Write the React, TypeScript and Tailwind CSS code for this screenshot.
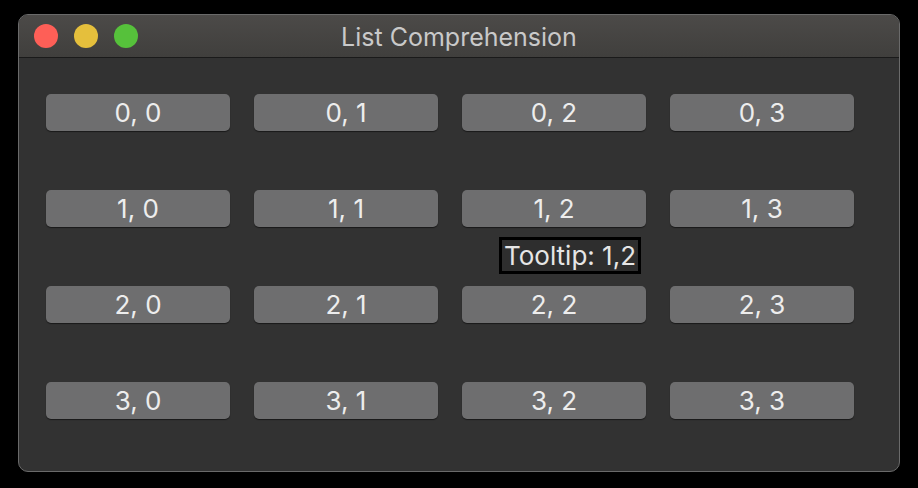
const rows = [0, 1, 2, 3];
const cols = [0, 1, 2, 3];

function TrafficLight({ color }: { color: string }) {
  return <div className={`w-6 h-6 rounded-full ${color}`} />;
}

export default function App() {
  return (
    <div
      className="w-[918px] h-[488px] bg-black pt-[14px] pl-[18px] relative"
      style={{ fontFamily: 'Inter, "Liberation Sans", sans-serif' }}
    >
      <div className="w-[882px] h-[458px] rounded-[10px] border border-[#6a6a6a] bg-[#323232] overflow-hidden flex flex-col">
        <div className="h-[43px] shrink-0 flex items-center px-[15px] bg-gradient-to-b from-[#4c4a48] to-[#403f3d] border-b border-[#1a1a1a] relative">
          <div className="flex gap-4 items-center">
            <TrafficLight color="bg-[#fe5f57]" />
            <TrafficLight color="bg-[#e5bf3c]" />
            <TrafficLight color="bg-[#56c13b]" />
          </div>
          <div className="absolute inset-0 flex items-center justify-center text-[25px] text-[#c9c9c9] pt-[3px]">
            List Comprehension
          </div>
        </div>
        <div className="flex flex-col gap-[59px] pt-[36px] pl-[27px]">
          {rows.map((r) => (
            <div key={r} className="flex gap-6">
              {cols.map((c) => (
                <div
                  key={c}
                  className="w-[184px] h-[37px] rounded-[5px] bg-[#6e6e6f] shadow-[0_1px_1px_rgba(0,0,0,0.5)] flex items-center justify-center text-[26px] text-[#ededed]"
                >
                  {r}, {c}
                </div>
              ))}
            </div>
          ))}
        </div>
      </div>
      <div className="absolute left-[499px] top-[237px] w-[142px] h-[37px] border-[3px] border-black bg-[#2e2e2e] flex items-center justify-center text-[26px] text-[#e6e6e6] whitespace-nowrap">
        Tooltip: 1,2
      </div>
    </div>
  );
}
